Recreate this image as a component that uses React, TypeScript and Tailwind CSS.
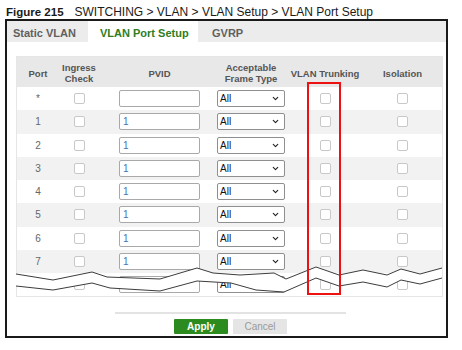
import { ChevronDown } from 'lucide-react';

const cols = 'grid grid-cols-[42px_40px_121px_62px_86px_1fr]';

const ports = ['*', '1', '2', '3', '4', '5', '6', '7', '8'];

const upper: [number, number][] = [
    [16, 274], [53, 280], [92, 272], [107, 277], [160, 279], [197, 268], [213, 273],
    [240, 275], [274, 273], [286, 279], [316, 267], [339, 275], [363, 270], [387, 275],
    [401, 269], [420, 274], [442, 268],
];

const lower: [number, number][] = [
    [16, 286], [53, 290], [92, 283], [110, 288], [160, 291], [197, 281], [231, 283],
    [256, 290], [284, 292], [316, 278], [339, 286], [363, 282], [387, 287], [401, 280],
    [420, 284], [442, 278],
];

const pts = (list: [number, number][]) => list.map(([x, y]) => `${x},${y}`).join(' ');

function Box() {
    return <span className="block h-[11px] w-[11px] rounded-[2px] border border-[#c8c8c8] bg-white" />;
}

function PortRow({ port, shaded }: { port: string; shaded: boolean }) {
    return (
        <div className={`${cols} h-[23.25px] items-center ${shaded ? 'bg-[#f2f2f2]' : 'bg-white'}`}>
            <div className="text-center text-[10px] text-[#666]">{port}</div>
            <div className="flex justify-center">
                <Box />
            </div>
            <div className="flex justify-center">
                <div className="h-[17px] w-[81px] shrink-0 rounded-[2px] border border-[#a9a9a9] bg-white pl-[3px] text-[10px] leading-[15px] text-[#4a74b0]">
                    {port === '*' ? '' : '1'}
                </div>
            </div>
            <div className="flex justify-center">
                <div className="flex h-[17px] w-[68px] shrink-0 items-center justify-between rounded-[2px] border border-[#8f8f8f] bg-white pl-[2px] pr-[4px] text-[10px] text-[#111]">
                    <span>All</span>
                    <ChevronDown size={9} strokeWidth={3} className="text-[#222]" />
                </div>
            </div>
            <div className="flex justify-center">
                <Box />
            </div>
            <div className="flex justify-center pr-[5px]">
                <Box />
            </div>
        </div>
    );
}

export default function App() {
    return (
        <div className="relative h-[350px] w-[462px] overflow-hidden bg-white font-['Liberation_Sans',Arial,sans-serif]">
            {/* caption */}
            <div className="h-[19px] whitespace-nowrap pl-[6px] pt-[5px] text-[12px] leading-[14px] text-[#1a1a1a]">
                <span className="text-[11.5px] font-bold">Figure 215</span>
                <span className="ml-[11px]">SWITCHING &gt; VLAN &gt; VLAN Setup &gt; VLAN Port Setup</span>
            </div>

            <div className="ml-[5px] flex h-[319px] w-[443px] flex-col border-2 border-[#1a1a1a]">
                {/* tabs */}
                <div className="flex h-[21px] bg-[#ececec] text-[11px] font-bold leading-[17px]">
                    <div className="w-[81px] pl-[6px] pt-[4px] text-[#606060]">Static VLAN</div>
                    <div className="w-[110px] bg-white pl-[12px] pt-[4px] text-[#2f7d22]">VLAN Port Setup</div>
                    <div className="pl-[14px] pt-[4px] text-[#606060]">GVRP</div>
                </div>

                {/* table */}
                <div className="ml-[9px] mt-[14px] w-[427px] border border-[#e6e6e6]">
                    <div className={`${cols} h-[30px] items-center bg-[#e8e8e8] pt-[2px] text-center text-[9.5px] font-bold leading-[11px] text-[#555]`}>
                        <div>Port</div>
                        <div>
                            Ingress
                            <br />
                            Check
                        </div>
                        <div>PVID</div>
                        <div className="whitespace-nowrap">
                            Acceptable
                            <br />
                            Frame Type
                        </div>
                        <div className="whitespace-nowrap">VLAN Trunking</div>
                        <div className="pr-[5px]">Isolation</div>
                    </div>
                    {ports.map((p, i) => (
                        <PortRow key={p} port={p} shaded={i % 2 === 1} />
                    ))}
                </div>

                <div className="ml-[108px] mt-[15px] h-[2px] w-[231px] bg-[#e3e3e3]" />

                <div className="ml-[108px] mt-[5px] flex w-[231px] justify-center gap-[5px] text-[10px]">
                    <button className="h-[15px] w-[54px] rounded-[1px] bg-[#2c8b1f] font-bold text-white">Apply</button>
                    <button className="h-[15px] w-[54px] rounded-[1px] bg-[#e5e5e5] text-[#9a9a9a]">Cancel</button>
                </div>
            </div>

            {/* break marks */}
            <svg className="pointer-events-none absolute inset-0" width="462" height="350" viewBox="0 0 462 350">
                <polygon points={`${pts(upper)} ${pts([...lower].reverse())}`} fill="#ffffff" />
                <polyline points={pts(upper)} fill="none" stroke="#3c3c3c" strokeWidth="1" />
                <polyline points={pts(lower)} fill="none" stroke="#3c3c3c" strokeWidth="1" />
            </svg>

            {/* highlight */}
            <div className="pointer-events-none absolute left-[307px] top-[82px] h-[213px] w-[34px] border-2 border-[#ee1111]" />
        </div>
    );
}
